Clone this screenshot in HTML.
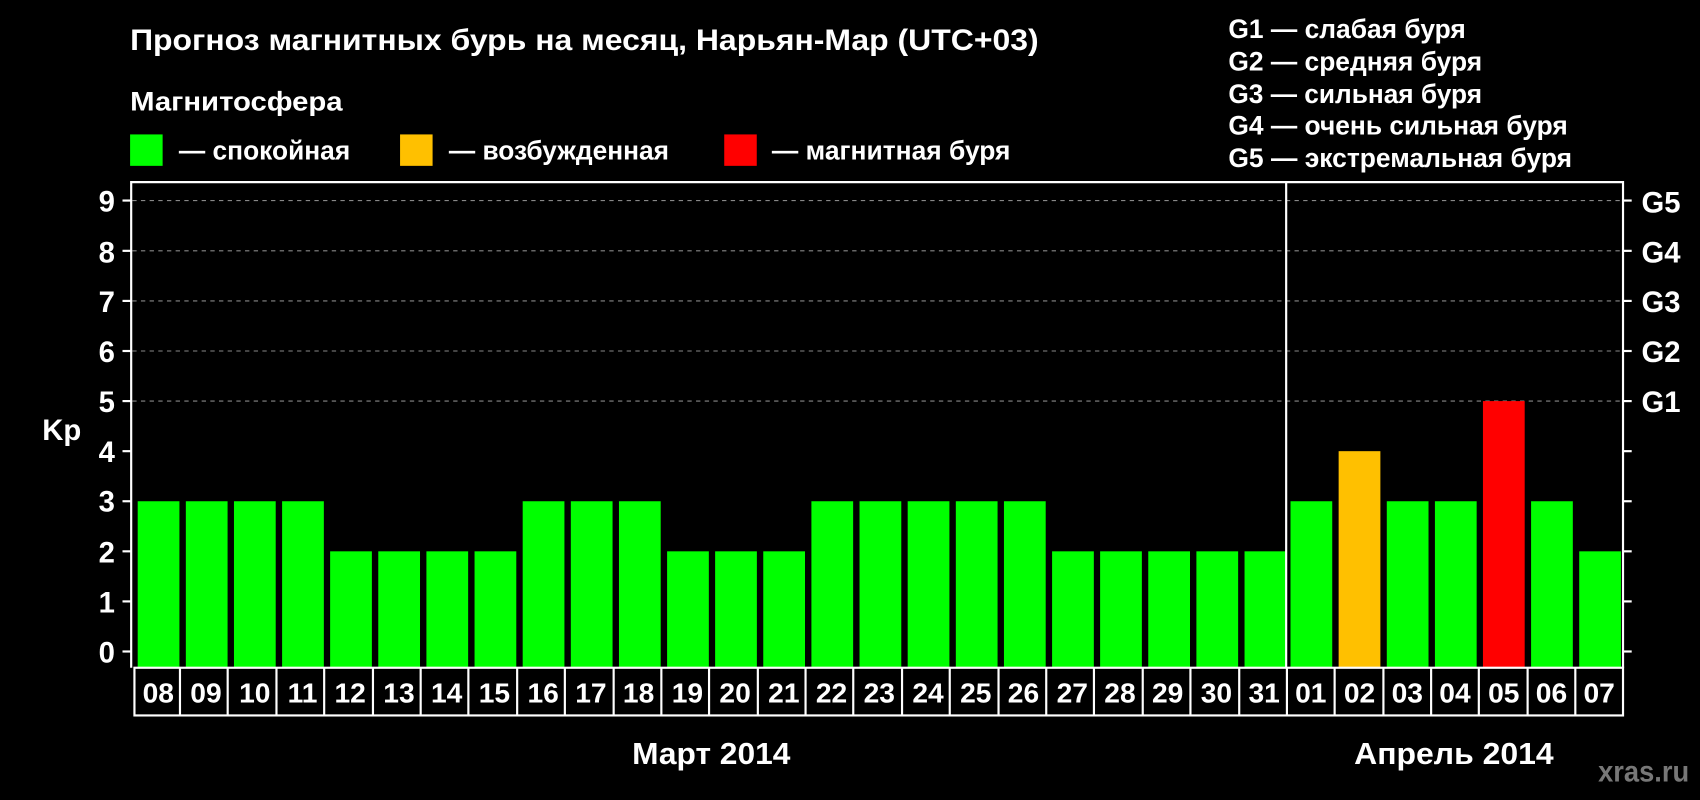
<!DOCTYPE html>
<html><head><meta charset="utf-8"><style>
html,body{margin:0;padding:0;background:#000;width:1700px;height:800px;overflow:hidden}
svg{display:block}
text{font-family:"Liberation Sans",sans-serif;font-weight:bold;fill:#fff}
</style></head><body>
<svg width="1700" height="800" viewBox="0 0 1568 738" preserveAspectRatio="none">
<rect width="1568" height="738" fill="#000"/>
<text x="120" y="46" font-size="27" textLength="838" lengthAdjust="spacingAndGlyphs">Прогноз магнитных бурь на месяц, Нарьян-Мар (UTC+03)</text>
<text x="120" y="102" font-size="25" textLength="196" lengthAdjust="spacingAndGlyphs">Магнитосфера</text>
<rect x="120" y="124" width="30" height="29" fill="#00ff00"/>
<text x="165" y="147" font-size="25" textLength="158" lengthAdjust="spacingAndGlyphs">— спокойная</text>
<rect x="369" y="124" width="30" height="29" fill="#ffc000"/>
<text x="414" y="147" font-size="25" textLength="203" lengthAdjust="spacingAndGlyphs">— возбужденная</text>
<rect x="668" y="124" width="30" height="29" fill="#ff0000"/>
<text x="712" y="147" font-size="25" textLength="220" lengthAdjust="spacingAndGlyphs">— магнитная буря</text>
<g font-size="25">
<text x="1133" y="35" textLength="219" lengthAdjust="spacingAndGlyphs">G1 — слабая буря</text>
<text x="1133" y="65" textLength="234" lengthAdjust="spacingAndGlyphs">G2 — средняя буря</text>
<text x="1133" y="95" textLength="234" lengthAdjust="spacingAndGlyphs">G3 — сильная буря</text>
<text x="1133" y="124" textLength="313" lengthAdjust="spacingAndGlyphs">G4 — очень сильная буря</text>
<text x="1133" y="154" textLength="317" lengthAdjust="spacingAndGlyphs">G5 — экстремальная буря</text>
</g>
<g stroke="#888" stroke-width="1" stroke-dasharray="4,4">
<line x1="122" y1="185" x2="1496" y2="185"/>
<line x1="122" y1="231.4" x2="1496" y2="231.4"/>
<line x1="122" y1="277.6" x2="1496" y2="277.6"/>
<line x1="122" y1="323.8" x2="1496" y2="323.8"/>
<line x1="122" y1="370" x2="1496" y2="370"/>
</g>
<g fill="#00ff00">
<rect x="127" y="462.4" width="38.5" height="153.6"/>
<rect x="171.4" y="462.4" width="38.5" height="153.6"/>
<rect x="215.8" y="462.4" width="38.5" height="153.6"/>
<rect x="260.2" y="462.4" width="38.5" height="153.6"/>
<rect x="304.5" y="508.6" width="38.5" height="107.4"/>
<rect x="348.9" y="508.6" width="38.5" height="107.4"/>
<rect x="393.3" y="508.6" width="38.5" height="107.4"/>
<rect x="437.7" y="508.6" width="38.5" height="107.4"/>
<rect x="482.1" y="462.4" width="38.5" height="153.6"/>
<rect x="526.5" y="462.4" width="38.5" height="153.6"/>
<rect x="570.9" y="462.4" width="38.5" height="153.6"/>
<rect x="615.3" y="508.6" width="38.5" height="107.4"/>
<rect x="659.6" y="508.6" width="38.5" height="107.4"/>
<rect x="704" y="508.6" width="38.5" height="107.4"/>
<rect x="748.4" y="462.4" width="38.5" height="153.6"/>
<rect x="792.8" y="462.4" width="38.5" height="153.6"/>
<rect x="837.2" y="462.4" width="38.5" height="153.6"/>
<rect x="881.6" y="462.4" width="38.5" height="153.6"/>
<rect x="926" y="462.4" width="38.5" height="153.6"/>
<rect x="970.4" y="508.6" width="38.5" height="107.4"/>
<rect x="1014.7" y="508.6" width="38.5" height="107.4"/>
<rect x="1059.1" y="508.6" width="38.5" height="107.4"/>
<rect x="1103.5" y="508.6" width="38.5" height="107.4"/>
<rect x="1147.9" y="508.6" width="38.5" height="107.4"/>
<rect x="1190.3" y="462.4" width="38.5" height="153.6"/>
<rect x="1279.1" y="462.4" width="38.5" height="153.6"/>
<rect x="1323.5" y="462.4" width="38.5" height="153.6"/>
<rect x="1412.2" y="462.4" width="38.5" height="153.6"/>
<rect x="1456.6" y="508.6" width="38.5" height="107.4"/>
</g>
<rect x="1234.7" y="416.2" width="38.5" height="199.8" fill="#ffc000"/>
<rect x="1367.8" y="370" width="38.5" height="246" fill="#ff0000"/>
<g stroke="#fff" stroke-width="2" fill="none">
<polyline points="1497,616 1497,168 121,168 121,616"/>
<line x1="1186.3" y1="168" x2="1186.3" y2="616"/>
<rect x="124" y="616" width="1373" height="44"/>
<line x1="166" y1="616" x2="166" y2="660"/><line x1="210" y1="616" x2="210" y2="660"/><line x1="255" y1="616" x2="255" y2="660"/><line x1="299" y1="616" x2="299" y2="660"/><line x1="344" y1="616" x2="344" y2="660"/><line x1="388" y1="616" x2="388" y2="660"/><line x1="432" y1="616" x2="432" y2="660"/><line x1="477" y1="616" x2="477" y2="660"/><line x1="521" y1="616" x2="521" y2="660"/><line x1="566" y1="616" x2="566" y2="660"/><line x1="610" y1="616" x2="610" y2="660"/><line x1="654" y1="616" x2="654" y2="660"/><line x1="699" y1="616" x2="699" y2="660"/><line x1="743" y1="616" x2="743" y2="660"/><line x1="787" y1="616" x2="787" y2="660"/><line x1="832" y1="616" x2="832" y2="660"/><line x1="876" y1="616" x2="876" y2="660"/><line x1="921" y1="616" x2="921" y2="660"/><line x1="965" y1="616" x2="965" y2="660"/><line x1="1009" y1="616" x2="1009" y2="660"/><line x1="1054" y1="616" x2="1054" y2="660"/><line x1="1098" y1="616" x2="1098" y2="660"/><line x1="1143" y1="616" x2="1143" y2="660"/><line x1="1187" y1="616" x2="1187" y2="660"/><line x1="1231" y1="616" x2="1231" y2="660"/><line x1="1276" y1="616" x2="1276" y2="660"/><line x1="1320" y1="616" x2="1320" y2="660"/><line x1="1364" y1="616" x2="1364" y2="660"/><line x1="1409" y1="616" x2="1409" y2="660"/><line x1="1453" y1="616" x2="1453" y2="660"/>
<g>
<line x1="113" y1="601" x2="121" y2="601"/><line x1="113" y1="554.8" x2="121" y2="554.8"/><line x1="113" y1="508.6" x2="121" y2="508.6"/><line x1="113" y1="462.4" x2="121" y2="462.4"/><line x1="113" y1="416.2" x2="121" y2="416.2"/><line x1="113" y1="370" x2="121" y2="370"/><line x1="113" y1="323.8" x2="121" y2="323.8"/><line x1="113" y1="277.6" x2="121" y2="277.6"/><line x1="113" y1="231.4" x2="121" y2="231.4"/><line x1="113" y1="185" x2="121" y2="185"/>
<line x1="1497" y1="601" x2="1505" y2="601"/><line x1="1497" y1="554.8" x2="1505" y2="554.8"/><line x1="1497" y1="508.6" x2="1505" y2="508.6"/><line x1="1497" y1="462.4" x2="1505" y2="462.4"/><line x1="1497" y1="416.2" x2="1505" y2="416.2"/><line x1="1497" y1="370" x2="1505" y2="370"/><line x1="1497" y1="323.8" x2="1505" y2="323.8"/><line x1="1497" y1="277.6" x2="1505" y2="277.6"/><line x1="1497" y1="231.4" x2="1505" y2="231.4"/><line x1="1497" y1="185" x2="1505" y2="185"/>
</g>
</g>
<g font-size="27" text-anchor="end">
<text x="106" y="611">0</text><text x="106" y="565">1</text><text x="106" y="519">2</text><text x="106" y="472">3</text><text x="106" y="426">4</text><text x="106" y="380">5</text><text x="106" y="334">6</text><text x="106" y="288">7</text><text x="106" y="242">8</text><text x="106" y="195">9</text>
</g>
<text x="39" y="406" font-size="27">Kp</text>
<g font-size="27">
<text x="1514" y="380">G1</text><text x="1514" y="334">G2</text><text x="1514" y="288">G3</text><text x="1514" y="242">G4</text><text x="1514" y="196">G5</text>
</g>
<g font-size="26" text-anchor="middle">
<text x="146" y="648">08</text><text x="190" y="648">09</text><text x="235" y="648">10</text><text x="279" y="648">11</text><text x="323" y="648">12</text><text x="368" y="648">13</text><text x="412" y="648">14</text><text x="456" y="648">15</text><text x="501" y="648">16</text><text x="545" y="648">17</text><text x="589" y="648">18</text><text x="634" y="648">19</text><text x="678" y="648">20</text><text x="723" y="648">21</text><text x="767" y="648">22</text><text x="811" y="648">23</text><text x="856" y="648">24</text><text x="900" y="648">25</text><text x="944" y="648">26</text><text x="989" y="648">27</text><text x="1033" y="648">28</text><text x="1077" y="648">29</text><text x="1122" y="648">30</text><text x="1166" y="648">31</text><text x="1209" y="648">01</text><text x="1254" y="648">02</text><text x="1298" y="648">03</text><text x="1342" y="648">04</text><text x="1387" y="648">05</text><text x="1431" y="648">06</text><text x="1475" y="648">07</text>
</g>
<text x="583" y="705" font-size="28" textLength="146" lengthAdjust="spacingAndGlyphs">Март 2014</text>
<text x="1249" y="705" font-size="28" textLength="184" lengthAdjust="spacingAndGlyphs">Апрель 2014</text>
<text x="1474" y="721" font-size="27" textLength="84" lengthAdjust="spacingAndGlyphs" style="fill:#777">xras.ru</text>
</svg>
</body></html>
